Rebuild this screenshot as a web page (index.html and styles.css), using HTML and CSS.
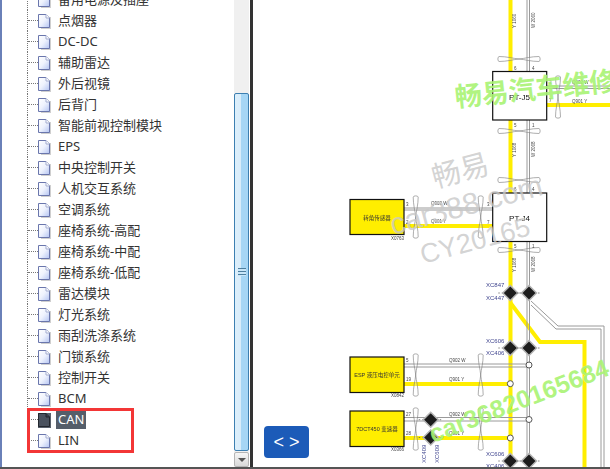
FILE: index.html
```html
<!DOCTYPE html>
<html lang="zh">
<head>
    <meta charset="UTF-8">
    <title>电路图</title>
    <link rel="stylesheet" href="styles.css">
</head>
<body>
<svg class="defs" width="0" height="0">
    <defs>
        <linearGradient id="pagefill" x1="0" y1="0" x2="1" y2="1">
            <stop offset="0" stop-color="#ffffff"/>
            <stop offset=".5" stop-color="#eef2fd"/>
            <stop offset="1" stop-color="#b4c4f2"/>
        </linearGradient>
        <symbol id="doc" viewBox="0 0 13 15">
            <path d="M3 3H13V15H3Z" fill="#cfcfcf"/>
            <path d="M.5 .5H8L11.500 4V13.500H.5Z" fill="url(#pagefill)" stroke="#6a76ac"/>
            <path d="M8 .5V4H11.500" fill="#fff" stroke="#a3acd0"/>
        </symbol>
        <symbol id="docdark" viewBox="0 0 13 15">
            <path d="M.5 .5H8L11.500 4V13.500H.5Z" fill="#4a525e" stroke="#23272e"/>
            <path d="M8 .5V4H11.500" fill="#3a404a" stroke="#23272e"/>
        </symbol>
        <g id="loop">
            <path d="M-20 -2.500C-12 -2.500 -6 -.5 0 0C6 -.5 12 -2.500 20 -2.500C21.500 -2.500 21.500 2.500 20 2.500C12 2.500 6 .5 0 0C-6 .5 -12 2.500 -20 2.500C-21.500 2.500 -21.500 -2.500 -20 -2.500Z" fill="#fff" fill-opacity=".25" stroke="#777" stroke-width=".6"/>
        </g>
        <g id="node">
            <path d="M-12 0H12" stroke="#555" stroke-width=".7" stroke-dasharray="1.500 2"/>
            <path d="M0 -7.500L7.500 0L0 7.500L-7.500 0Z" fill="#1d1d1d" stroke="#b5b5b5" stroke-width="1.500"/>
        </g>
    </defs>
</svg>

<div class="app">
    <div class="tree-pane">
        <ul class="tree">
            <li class="tree-row"><span class="dots"></span><svg class="doc"><use href="#doc"/></svg><span class="label">备用电源及插座</span></li>
            <li class="tree-row"><span class="dots"></span><svg class="doc"><use href="#doc"/></svg><span class="label">点烟器</span></li>
            <li class="tree-row"><span class="dots"></span><svg class="doc"><use href="#doc"/></svg><span class="label">DC-DC</span></li>
            <li class="tree-row"><span class="dots"></span><svg class="doc"><use href="#doc"/></svg><span class="label">辅助雷达</span></li>
            <li class="tree-row"><span class="dots"></span><svg class="doc"><use href="#doc"/></svg><span class="label">外后视镜</span></li>
            <li class="tree-row"><span class="dots"></span><svg class="doc"><use href="#doc"/></svg><span class="label">后背门</span></li>
            <li class="tree-row"><span class="dots"></span><svg class="doc"><use href="#doc"/></svg><span class="label">智能前视控制模块</span></li>
            <li class="tree-row"><span class="dots"></span><svg class="doc"><use href="#doc"/></svg><span class="label">EPS</span></li>
            <li class="tree-row"><span class="dots"></span><svg class="doc"><use href="#doc"/></svg><span class="label">中央控制开关</span></li>
            <li class="tree-row"><span class="dots"></span><svg class="doc"><use href="#doc"/></svg><span class="label">人机交互系统</span></li>
            <li class="tree-row"><span class="dots"></span><svg class="doc"><use href="#doc"/></svg><span class="label">空调系统</span></li>
            <li class="tree-row"><span class="dots"></span><svg class="doc"><use href="#doc"/></svg><span class="label">座椅系统-高配</span></li>
            <li class="tree-row"><span class="dots"></span><svg class="doc"><use href="#doc"/></svg><span class="label">座椅系统-中配</span></li>
            <li class="tree-row"><span class="dots"></span><svg class="doc"><use href="#doc"/></svg><span class="label">座椅系统-低配</span></li>
            <li class="tree-row"><span class="dots"></span><svg class="doc"><use href="#doc"/></svg><span class="label">雷达模块</span></li>
            <li class="tree-row"><span class="dots"></span><svg class="doc"><use href="#doc"/></svg><span class="label">灯光系统</span></li>
            <li class="tree-row"><span class="dots"></span><svg class="doc"><use href="#doc"/></svg><span class="label">雨刮洗涤系统</span></li>
            <li class="tree-row"><span class="dots"></span><svg class="doc"><use href="#doc"/></svg><span class="label">门锁系统</span></li>
            <li class="tree-row"><span class="dots"></span><svg class="doc"><use href="#doc"/></svg><span class="label">控制开关</span></li>
            <li class="tree-row"><span class="dots"></span><svg class="doc"><use href="#doc"/></svg><span class="label">BCM</span></li>
            <li class="tree-row selected"><span class="dots"></span><svg class="doc"><use href="#docdark"/></svg><span class="label">CAN</span></li>
            <li class="tree-row"><span class="dots"></span><svg class="doc"><use href="#doc"/></svg><span class="label">LIN</span></li>
        </ul>
        <div class="red-box"></div>
        <div class="scrollbar">
            <div class="scroll-gap"></div>
            <div class="scroll-thumb"><span class="grip"></span></div>
            <div class="scroll-down"><span class="arrow"></span></div>
        </div>
    </div>
    <div class="splitter"></div>
    <div class="diagram">
        <svg class="schematic" width="357" height="467" viewBox="253 0 357 467">
            <g class="blurry">
                <!-- main wires -->
                <path class="yellow" d="M510.500 0V71M510.500 120V193M510.500 242V467"/>
                <path class="yellow" d="M510.500 303L540 342H584.500V467"/>
                <path class="yellow" d="M547 105H610M404 226H493M404 384H510M404 438H510"/>
                <path class="gray" d="M527 0V71M529.500 0V71M527 120V193M529.500 120V193M527 242V467M529.500 242V467"/>
                <path class="gray" d="M547 86H610M547 88.500H610M404 208H493M404 210H493M404 364H529M404 367H529M404 417.500H529M404 421H529"/>
                <path class="gray" d="M531 305L556 329H601V467M531 301L558 326H604V467"/>

                <!-- twisted pair loops -->
                <use href="#loop" transform="translate(519 59)"/>
                <use href="#loop" transform="translate(519 131)"/>
                <use href="#loop" transform="translate(519 180)"/>
                <use href="#loop" transform="translate(519 250)"/>
                <use href="#loop" transform="translate(558 97) rotate(90)"/>
                <use href="#loop" transform="translate(415.700 217) rotate(90)"/>
                <use href="#loop" transform="translate(480.700 217) rotate(90)"/>
                <use href="#loop" transform="translate(415.700 375) rotate(90)"/>
                <use href="#loop" transform="translate(480.700 375) rotate(90)"/>
                <use href="#loop" transform="translate(415.700 429) rotate(90)"/>
                <use href="#loop" transform="translate(480.700 429) rotate(90)"/>

                <!-- modules -->
                <rect class="box" x="492.700" y="71.500" width="54" height="48.500"/>
                <rect class="box" x="492.700" y="193" width="54" height="48.500"/>
                <rect class="box-y" x="350" y="199.500" width="54" height="35"/>
                <rect class="box-y" x="350" y="357" width="54" height="35.500"/>
                <rect class="box-y" x="350" y="411" width="54" height="35.500"/>
                <text class="big" x="519.500" y="100">PT-J5</text>
                <text class="big" x="519.500" y="221">PT-J4</text>
                <text class="mod" x="377" y="220">转角传感器</text>
                <text class="mod" x="377" y="377">ESP 液压电控单元</text>
                <text class="mod" x="377" y="431">7DCT450 变速器</text>
                <text class="tiny" x="391" y="240">X0763</text>
                <text class="tiny" x="391" y="397">X0842</text>
                <text class="tiny" x="391" y="451">X0366</text>

                <!-- pins and wire names -->
                <text class="tiny" x="514" y="70">6</text><text class="tiny" x="532" y="70">4</text>
                <text class="tiny" x="514" y="127">5</text><text class="tiny" x="532" y="127">1</text>
                <text class="tiny" x="514" y="191">6</text><text class="tiny" x="532" y="191">4</text>
                <text class="tiny" x="514" y="248">5</text><text class="tiny" x="532" y="248">1</text>
                <text class="tiny" x="549" y="84">3</text><text class="tiny" x="549" y="102">7</text>
                <text class="tiny" x="572" y="84">Q902 W</text><text class="tiny" x="572" y="103">Q901 Y</text>
                <text class="tiny" x="406" y="206">3</text><text class="tiny" x="406" y="224">2</text>
                <text class="tiny" x="431" y="205">Q902 W</text><text class="tiny" x="431" y="223">Q901 Y</text>
                <text class="tiny" x="487" y="206">3</text><text class="tiny" x="487" y="224">7</text>
                <text class="tiny" x="406" y="362">5</text><text class="tiny" x="406" y="381">19</text>
                <text class="tiny" x="449" y="362">Q902 W</text><text class="tiny" x="449" y="381">Q901 Y</text>
                <text class="tiny" x="406" y="416">27</text><text class="tiny" x="406" y="435">28</text>
                <text class="tiny" x="449" y="416">Q902 W</text><text class="tiny" x="449" y="435">Q901 Y</text>
                <text class="tiny" transform="translate(516 28) rotate(-90)">Y 1060</text>
                <text class="tiny" transform="translate(535 28) rotate(-90)">W 2060</text>
                <text class="tiny" transform="translate(516 157) rotate(-90)">Y 1068</text>
                <text class="tiny" transform="translate(535 157) rotate(-90)">W 2068</text>
                <text class="tiny" transform="translate(516 272) rotate(-90)">Y 1068</text>
                <text class="tiny" transform="translate(535 272) rotate(-90)">W 2068</text>

                <!-- splices -->
                <use href="#node" x="510.300" y="293"/>
                <use href="#node" x="529" y="293"/>
                <use href="#node" x="510.300" y="348"/>
                <use href="#node" x="529" y="348"/>
                <use href="#node" x="510.300" y="461"/>
                <use href="#node" x="529" y="461"/>
                <use href="#node" x="430.700" y="419.700"/>
                <use href="#node" x="430.700" y="437.500"/>
                <circle class="joint" cx="529" cy="365" r="3"/>
                <circle class="joint" cx="510.300" cy="383.700" r="3"/>
                <circle class="joint" cx="529" cy="419.500" r="3"/>
                <circle class="joint" cx="510.300" cy="438" r="3"/>

                <text class="conn" x="486" y="287">XC847</text>
                <text class="conn" x="486" y="300">XC447</text>
                <text class="conn" x="486" y="343">XC606</text>
                <text class="conn" x="486" y="355">XC406</text>
                <text class="conn" x="486" y="456">XC606</text>
                <text class="conn" x="486" y="468">XC406</text>
                <text class="conn" transform="translate(426 463) rotate(-90)">XC409</text>
                <text class="conn" transform="translate(439 463) rotate(-90)">XC609</text>
            </g>

            <!-- watermarks -->
            <text class="mark-gray" font-size="29" transform="translate(435 188) rotate(-15)">畅易</text>
            <text class="mark-gray" font-size="30" transform="translate(393 235) rotate(-15)">car388.com</text>
            <text class="mark-gray" font-size="27" transform="translate(423 264) rotate(-15)">CY20165</text>
            <text class="mark-green" font-size="27" transform="translate(456 107) rotate(-6)">畅易汽车维修</text>
            <text class="mark-green" font-size="25" transform="translate(433 443) rotate(-21)">car36820165684</text>
        </svg>
        <button class="nav-btn">&lt; &gt;</button>
    </div>
</div>
</body>
</html>
```

FILE: styles.css
```css
* {
    box-sizing: border-box;
    padding: 0;
    margin: 0;
}

html, body {
    width: 610px;
    height: 469px;
    overflow: hidden;
    background: white;
}

.defs {
    display: block;
    height: 0;
}

.app {
    display: flex;
    height: 469px;
    border-bottom: 2px solid #555;
}

/* left tree */
.tree-pane {
    position: relative;
    display: flex;
    width: 250px;
    height: 467px;
    overflow: hidden;
    border-left: 2px solid #6a80b8;
}

.tree {
    flex: 1;
    list-style: none;
    margin-top: -11px;
    padding-left: 25px;
}

.tree-row {
    display: flex;
    align-items: center;
    height: 21px;
    border-left: 1px dotted #777;
    font-family: "Noto Sans", "Noto Sans CJK SC", sans-serif;
    font-size: 13px;
    color: #333;
}

.dots {
    width: 10px;
    border-top: 1px dotted #777;
}

.doc {
    width: 13px;
    height: 15px;
    margin-top: 2px;
    margin-right: 5px;
    flex: none;
}

.label {
    display: block;
    height: 19px;
    line-height: 19px;
    padding: 0 2px;
    white-space: nowrap;
}

.selected .label {
    background: #555e6a;
    color: white;
}

.selected .doc {
    background: #5a626d;
}

.red-box {
    position: absolute;
    left: 25px;
    top: 408px;
    width: 107px;
    height: 45px;
    border: 3px solid #f33636;
}

/* scrollbar */
.scrollbar {
    display: flex;
    flex-direction: column;
    width: 15px;
    margin-right: 1px;
    background: #f0f0f0;
}

.scroll-gap {
    height: 93px;
}

.scroll-thumb {
    flex: 1;
    display: flex;
    align-items: center;
    justify-content: center;
    border: 1px solid #3c7fb1;
    border-radius: 2px;
    background: linear-gradient(to right, #dcefFb 0, #d8ecfa 45%, #a6d6f5 50%, #a6d6f5 100%);
}

.grip {
    display: block;
    width: 8px;
    height: 8px;
    background: repeating-linear-gradient(to bottom, #4d7f9f 0, #4d7f9f 1px, #c8e6f9 1px, #c8e6f9 3px);
}

.scroll-down {
    display: flex;
    align-items: center;
    justify-content: center;
    height: 15px;
    margin-top: 1px;
    border: 1px solid #b5b5b5;
    border-radius: 2px;
    background: linear-gradient(to bottom, #f6f6f6, #d9d9d9);
}

.arrow {
    border-top: 4px solid #555;
    border-left: 4px solid transparent;
    border-right: 4px solid transparent;
}

.splitter {
    width: 3px;
    background: #333;
}

/* right side drawing */
.diagram {
    position: relative;
    flex: 1;
    overflow: hidden;
}

.schematic {
    display: block;
}

.blurry {
    filter: blur(.4px);
}

.yellow {
    fill: none;
    stroke: #ffee00;
    stroke-width: 4;
}

.gray {
    fill: none;
    stroke: #9a9a9a;
    stroke-width: 1;
}

.box {
    fill: white;
    stroke: #111;
    stroke-width: 1.200;
}

.box-y {
    fill: #ffee00;
    stroke: #111;
    stroke-width: 1.200;
}

.joint {
    fill: white;
    stroke: #555;
    stroke-width: 1;
}

.schematic text {
    font-family: "Liberation Sans", "Noto Sans CJK SC", sans-serif;
}

.big {
    font-size: 8px;
    fill: #111;
    text-anchor: middle;
}

.mod {
    font-size: 5.500px;
    fill: #333;
    text-anchor: middle;
}

.tiny {
    font-size: 4.500px;
    fill: #444;
}

.conn {
    font-size: 6px;
    fill: #41468f;
}

.schematic .mark-gray {
    fill: #c8c8c8;
    fill-opacity: .8;
}

.schematic .mark-green {
    fill: #a9f374;
    fill-opacity: .92;
    font-weight: bold;
}

.nav-btn {
    position: absolute;
    left: 11px;
    top: 426px;
    width: 45px;
    height: 32px;
    border: none;
    border-radius: 4px;
    background: #1c5bb8;
    color: white;
    font-family: "Liberation Sans", sans-serif;
    font-size: 18px;
}
```
